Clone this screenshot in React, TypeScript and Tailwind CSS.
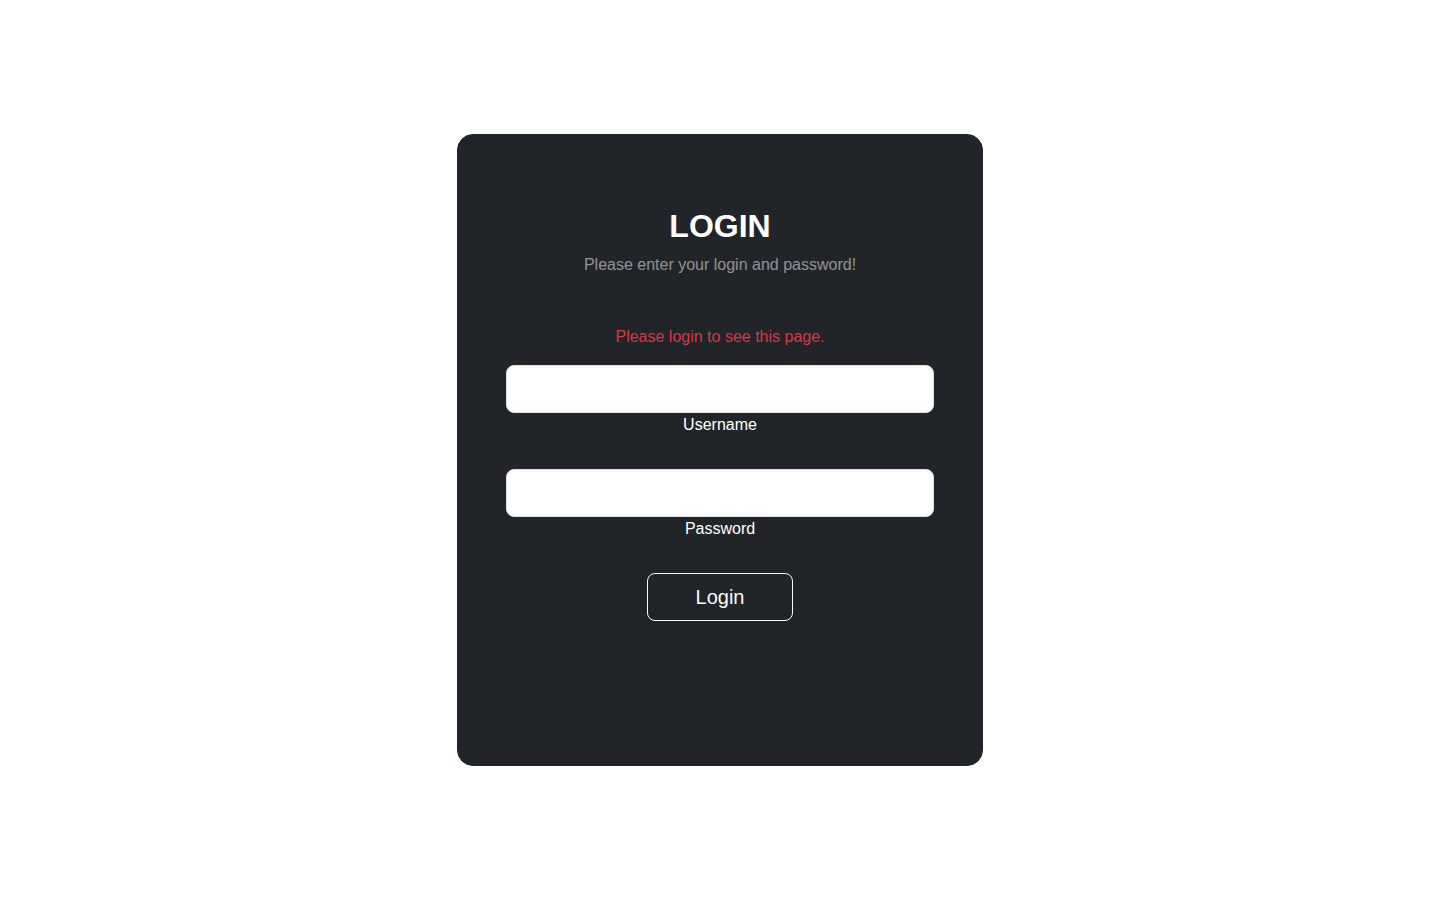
export default function App() {
  return (
    <div
      className="flex h-[900px] w-full items-center justify-center bg-white"
      style={{ fontFamily: '"Liberation Sans", Arial, sans-serif' }}
    >
      <div className="w-[526px] rounded-2xl border border-[#212529] bg-[#212529] text-white">
        <div className="p-12 text-center">
          <div className="mt-6 pb-12 mb-12">
            <h2 className="mb-2 text-[32px] font-bold leading-[1.2]">LOGIN</h2>
            <p className="mb-12 text-base leading-6 text-white/50">
              Please enter your login and password!
            </p>
            <p className="mb-4 text-base leading-6 text-[#dc3545]">Please login to see this page.</p>

            <div className="mb-8">
              <input
                type="text"
                className="block h-12 w-full rounded-lg border border-[#dee2e6] bg-white px-4 text-xl text-[#212529] outline-none"
              />
              <label className="block text-base leading-6 text-white">Username</label>
            </div>

            <div className="mb-8">
              <input
                type="password"
                className="block h-12 w-full rounded-lg border border-[#dee2e6] bg-white px-4 text-xl text-[#212529] outline-none"
              />
              <label className="block text-base leading-6 text-white">Password</label>
            </div>

            <button
              type="submit"
              className="h-12 w-[146px] rounded-lg border border-[#f8f9fa] bg-transparent text-xl leading-[1.5] text-[#f8f9fa]"
            >
              Login
            </button>
          </div>
        </div>
      </div>
    </div>
  );
}
